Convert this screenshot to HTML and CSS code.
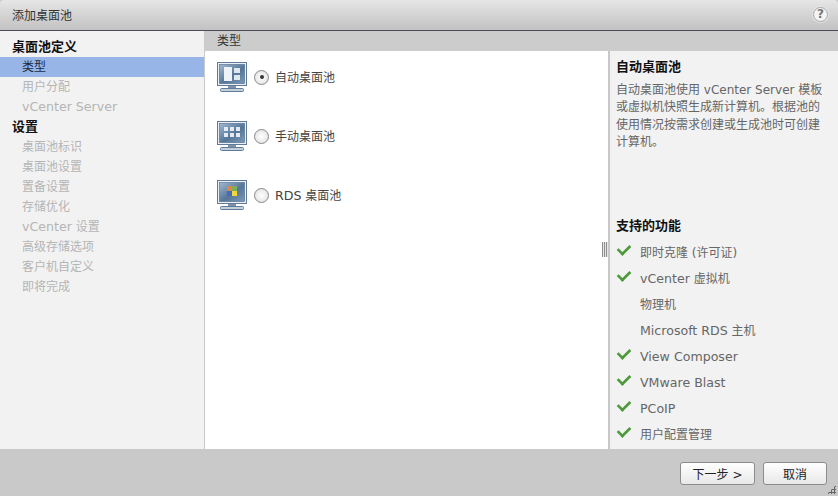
FILE: index.html
```html
<!DOCTYPE html>
<html lang="zh">
<head>
<meta charset="utf-8">
<title>添加桌面池</title>
<link rel="stylesheet" href="styles.css">
</head>
<body>
<svg class="defs" width="0" height="0" aria-hidden="true">
  <defs>
    <linearGradient id="scr" x1="0" y1="0" x2="1" y2="1">
      <stop offset="0" stop-color="#a3b8d0"/>
      <stop offset="0.55" stop-color="#557699"/>
      <stop offset="1" stop-color="#7c99b6"/>
    </linearGradient>
    <symbol id="monitor" viewBox="0 0 30 30">
      <rect x="0.5" y="0.5" width="29" height="23" fill="#e9eff5" stroke="#5f7b99"/>
      <rect x="2.5" y="2.5" width="25" height="19" fill="url(#scr)" stroke="#4a6686" stroke-width="0.6"/>
      <rect x="11" y="24" width="8" height="3" fill="#7d91a8"/>
      <rect x="3.5" y="26.5" width="23" height="3" rx="1" fill="#c3cfdb" stroke="#5f7b99"/>
    </symbol>
  </defs>
</svg>
<div class="dialog">
  <header class="titlebar">
    <span class="title">添加桌面池</span>
    <span class="help">?</span>
  </header>
  <div class="body">
    <nav class="nav">
      <div class="nav-head">桌面池定义</div>
      <div class="nav-item active">类型</div>
      <div class="nav-item">用户分配</div>
      <div class="nav-item"><span class="lat">vCenter Server</span></div>
      <div class="nav-head">设置</div>
      <div class="nav-item">桌面池标识</div>
      <div class="nav-item">桌面池设置</div>
      <div class="nav-item">置备设置</div>
      <div class="nav-item">存储优化</div>
      <div class="nav-item"><span class="lat">vCenter</span> 设置</div>
      <div class="nav-item">高级存储选项</div>
      <div class="nav-item">客户机自定义</div>
      <div class="nav-item">即将完成</div>
    </nav>
    <main class="content">
      <div class="section-head">类型</div>
      <div class="panes">
        <div class="options">
          <label class="option">
            <svg class="monitor" width="30" height="30" viewBox="0 0 30 30">
              <use href="#monitor"/>
              <rect x="7" y="5" width="8" height="14" fill="#eef3f8"/>
              <rect x="17" y="6" width="6" height="5" fill="#dfe7ef"/>
              <rect x="17" y="13" width="6" height="5" fill="#dfe7ef"/>
            </svg>
            <span class="radio checked"></span>
            <span class="option-text">自动桌面池</span>
          </label>
          <label class="option">
            <svg class="monitor" width="30" height="30" viewBox="0 0 30 30">
              <use href="#monitor"/>
              <g fill="#e3eaf1">
                <rect x="7" y="6" width="4" height="4"/><rect x="13" y="6" width="4" height="4"/><rect x="19" y="6" width="4" height="4"/>
                <rect x="7" y="12" width="4" height="4"/><rect x="13" y="12" width="4" height="4"/><rect x="19" y="12" width="4" height="4"/>
              </g>
            </svg>
            <span class="radio"></span>
            <span class="option-text">手动桌面池</span>
          </label>
          <label class="option">
            <svg class="monitor" width="30" height="30" viewBox="0 0 30 30">
              <use href="#monitor"/>
              <rect x="10" y="6" width="5" height="5" fill="#d98a4a"/>
              <rect x="15" y="6" width="5" height="5" fill="#7fae5a"/>
              <rect x="10" y="11" width="5" height="5" fill="#4a68b8"/>
              <rect x="15" y="11" width="5" height="5" fill="#f0d83c"/>
            </svg>
            <span class="radio"></span>
            <span class="option-text"><span class="lat">RDS</span> 桌面池</span>
          </label>
          <span class="grip"></span>
        </div>
        <aside class="info">
          <h2 class="info-title">自动桌面池</h2>
          <p class="info-text">自动桌面池使用 vCenter Server 模板或虚拟机快照生成新计算机。根据池的使用情况按需求创建或生成池时可创建计算机。</p>
          <h2 class="info-title features-title">支持的功能</h2>
          <ul class="features">
            <li class="yes">即时克隆 (许可证)</li>
            <li class="yes"><span class="lat">vCenter</span> 虚拟机</li>
            <li>物理机</li>
            <li><span class="lat">Microsoft RDS</span> 主机</li>
            <li class="yes"><span class="lat">View Composer</span></li>
            <li class="yes"><span class="lat">VMware Blast</span></li>
            <li class="yes"><span class="lat">PCoIP</span></li>
            <li class="yes">用户配置管理</li>
          </ul>
        </aside>
      </div>
    </main>
  </div>
  <footer class="footer">
    <button class="btn btn-next">下一步 &gt;</button>
    <button class="btn btn-cancel">取消</button>
    <span class="resize"></span>
  </footer>
</div>
</body>
</html>
```
FILE: styles.css
```css
* { box-sizing: border-box; }
html, body { margin: 0; padding: 0; }
body {
  width: 838px;
  height: 496px;
  overflow: hidden;
  font-family: "DejaVu Sans", "Noto Sans CJK SC", sans-serif;
  font-size: 12px;
  color: #555;
}
.defs { position: absolute; }
.lat { font-size: 12.6px; }
.dialog { display: flex; flex-direction: column; width: 838px; height: 496px; background: #c9c9c9; }

.titlebar {
  display: flex;
  align-items: center;
  justify-content: space-between;
  flex: 0 0 31px;
  padding: 0 10px 2px 12px;
  background: linear-gradient(#e6e6e6, #c2c2c2);
  border-bottom: 1px solid #4a4f55;
  border-radius: 4px 4px 0 0;
}
.title { font-size: 12px; color: #333; }
.help {
  width: 15px; height: 15px;
  display: flex; align-items: center; justify-content: center;
  border-radius: 50%;
  border: 1px solid #a5a5a5;
  background: #f4f4f4;
  font-size: 12px; font-weight: bold; color: #777;
  box-shadow: 0 0 0 1px #e4e4e4;
}

.body { display: flex; flex: 0 0 418px; height: 418px; min-height: 0; overflow: hidden; }

.nav { flex: 0 0 204px; background: #f2f2f2; padding-top: 6px; }
.nav-head { height: 20px; line-height: 20px; padding-left: 12px; font-weight: bold; color: #111; font-size: 13px; }
.nav-item { height: 20px; line-height: 20px; padding-left: 22px; color: #b5b5b5; font-size: 12px; }
.nav-item.active { background: #97b5e6; color: #1a2a44; }

.content { flex: 1; display: flex; flex-direction: column; margin-left: 1px; background: #fff; min-height: 0; }
.section-head { flex: 0 0 20px; height: 20px; line-height: 21px; padding-left: 12px; background: #ccc; color: #333; font-size: 12px; }
.panes { flex: 1; display: flex; min-height: 0; }

.options { position: relative; flex: 0 0 403px; padding: 11px 0 0 12px; display: flex; flex-direction: column; gap: 29px; }
.option { display: flex; align-items: center; height: 30px; }
.monitor { flex: none; }
.radio {
  width: 15px; height: 15px; margin: 0 6px 0 7px;
  flex: none;
  display: flex; align-items: center; justify-content: center;
  border-radius: 50%;
  border: 1px solid #888;
  background: radial-gradient(#fff, #ddd);
}
.radio.checked::after { content: ""; width: 4px; height: 4px; border-radius: 50%; background: #333; }
.option-text { padding-bottom: 2px; font-size: 12px; color: #444; }
.grip {
  position: absolute; right: 0; top: 191px;
  width: 6px; height: 15px;
  background: repeating-linear-gradient(90deg, #8f8f8f 0 1px, #e6e6e6 1px 2px);
}

.info { flex: 1; background: #f2f2f2; border-left: 2px solid #c8c8c8; padding: 7px 8px 0 6px; min-width: 0; }
.info-title { margin: 0; font-size: 13px; line-height: 17px; font-weight: bold; color: #111; }
.info-text { margin: 7px 0 0; width: 212px; font-size: 12px; line-height: 17.3px; color: #666; height: 69px; }
.features-title { margin-top: 66px; }
.features { list-style: none; margin: 8px 0 0; padding: 0 0 0 24px; }
.features li { position: relative; height: 26px; line-height: 22px; color: #666; font-size: 12px; }
.features li.yes::before {
  content: "";
  position: absolute; left: -23px; top: 2px;
  width: 11px; height: 6px;
  border-left: 3px solid #4c9a3c;
  border-bottom: 3px solid #4c9a3c;
  transform: rotate(-45deg) scale(0.9);
}

.footer { position: relative; flex: 1; display: flex; justify-content: flex-end; align-items: flex-start; gap: 8px; padding: 13px 11px 0 0; }
.btn {
  height: 23px; padding: 0;
  border: 1px solid #8c8c8c; border-radius: 3px;
  background: linear-gradient(#fff, #e8e8e8);
  font: 12px "DejaVu Sans", "Noto Sans CJK SC", sans-serif;
  color: #222;
}
.btn-next { width: 75px; }
.btn-cancel { width: 64px; }
.resize {
  position: absolute; right: 2px; bottom: 2px;
  width: 9px; height: 9px;
  background: radial-gradient(circle, #666 1px, transparent 1.2px) 0 0 / 3px 3px;
  clip-path: polygon(100% 0, 100% 100%, 0 100%);
}
```
